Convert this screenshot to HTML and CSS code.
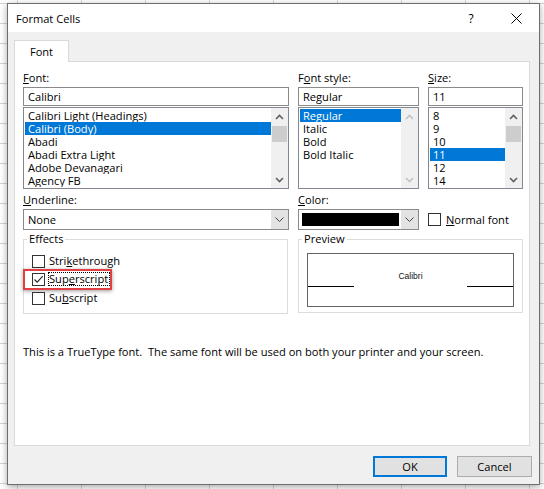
FILE: index.html
```html
<!DOCTYPE html>
<html>
<head>
<meta charset="utf-8">
<title>Format Cells</title>
<link rel="stylesheet" href="styles.css">
</head>
<body>
<div class="dialog">
  <div class="titlebar">
    <span class="title">Format Cells</span>
    <span class="help">?</span>
    <span class="close"><svg width="11" height="11" viewBox="0 0 11 11"><path d="M0.5 0.5 L10.5 10.5 M10.5 0.5 L0.5 10.5" stroke="#000" stroke-width="1" fill="none"/></svg></span>
  </div>
  <div class="client">
    <div class="tab">Font</div>
    <div class="panel">
      <div class="grid">
        <div class="field">
          <div class="label"><u>F</u>ont:</div>
          <div class="edit">Calibri</div>
          <div class="list">
            <div class="items">
              <div class="item">Calibri Light (Headings)</div>
              <div class="item sel">Calibri (Body)</div>
              <div class="item">Abadi</div>
              <div class="item">Abadi Extra Light</div>
              <div class="item">Adobe Devanagari</div>
              <div class="item">Agency FB</div>
            </div>
            <div class="vscroll">
              <div class="arrow"><svg width="9" height="6" viewBox="0 0 9 6"><path d="M1 5 L4.5 1.5 L8 5" fill="none" stroke="#606060" stroke-width="1.6"/></svg></div>
              <div class="thumb"></div>
              <div class="track"></div>
              <div class="arrow"><svg width="9" height="6" viewBox="0 0 9 6"><path d="M1 1 L4.5 4.5 L8 1" fill="none" stroke="#606060" stroke-width="1.6"/></svg></div>
            </div>
          </div>
        </div>
        <div class="field">
          <div class="label">F<u>o</u>nt style:</div>
          <div class="edit">Regular</div>
          <div class="list">
            <div class="items">
              <div class="item sel">Regular</div>
              <div class="item">Italic</div>
              <div class="item">Bold</div>
              <div class="item">Bold Italic</div>
            </div>
            <div class="vscroll">
              <div class="arrow"><svg width="9" height="6" viewBox="0 0 9 6"><path d="M1 5 L4.5 1.5 L8 5" fill="none" stroke="#c2c2c2" stroke-width="1.6"/></svg></div>
              <div class="track"></div>
              <div class="arrow"><svg width="9" height="6" viewBox="0 0 9 6"><path d="M1 1 L4.5 4.5 L8 1" fill="none" stroke="#c2c2c2" stroke-width="1.6"/></svg></div>
            </div>
          </div>
        </div>
        <div class="field">
          <div class="label"><u>S</u>ize:</div>
          <div class="edit">11</div>
          <div class="list">
            <div class="items">
              <div class="item">8</div>
              <div class="item">9</div>
              <div class="item">10</div>
              <div class="item sel">11</div>
              <div class="item">12</div>
              <div class="item">14</div>
            </div>
            <div class="vscroll">
              <div class="arrow"><svg width="9" height="6" viewBox="0 0 9 6"><path d="M1 5 L4.5 1.5 L8 5" fill="none" stroke="#606060" stroke-width="1.6"/></svg></div>
              <div class="thumb"></div>
              <div class="track"></div>
              <div class="arrow"><svg width="9" height="6" viewBox="0 0 9 6"><path d="M1 1 L4.5 4.5 L8 1" fill="none" stroke="#606060" stroke-width="1.6"/></svg></div>
            </div>
          </div>
        </div>

        <div class="field row2">
          <div class="label"><u>U</u>nderline:</div>
          <div class="combo">
            <div class="combo-text">None</div>
            <div class="combo-btn"><svg width="9" height="5" viewBox="0 0 9 5"><path d="M0.5 0.5 L4.5 4.5 L8.5 0.5" fill="none" stroke="#444" stroke-width="1"/></svg></div>
          </div>
        </div>
        <div class="field row2">
          <div class="label"><u>C</u>olor:</div>
          <div class="combo">
            <div class="swatch"></div>
            <div class="combo-btn"><svg width="9" height="5" viewBox="0 0 9 5"><path d="M0.5 0.5 L4.5 4.5 L8.5 0.5" fill="none" stroke="#444" stroke-width="1"/></svg></div>
          </div>
        </div>
        <div class="normal row2">
          <span class="box"></span><span class="cb-text"><u>N</u>ormal font</span>
        </div>

        <fieldset class="group effects">
          <legend>Effects</legend>
          <div class="cb-row first">
            <span class="box"></span><span class="cb-text">Stri<u>k</u>ethrough</span>
          </div>
          <div class="cb-row">
            <span class="box"><svg width="11" height="11" viewBox="0 0 11 11"><path d="M1.5 5.5 L4.2 8.2 L9.7 2.2" fill="none" stroke="#222" stroke-width="1.1"/></svg></span><span class="cb-text focus">Sup<u>e</u>rscript</span>
            <span class="redbox"></span>
          </div>
          <div class="cb-row last">
            <span class="box"></span><span class="cb-text">Su<u>b</u>script</span>
          </div>
        </fieldset>
        <fieldset class="group preview">
          <legend>Preview</legend>
          <div class="pv">
            <div class="baseline"></div>
            <div class="pv-text">Calibri</div>
            <div class="baseline"></div>
          </div>
        </fieldset>
      </div>
      <div class="note">This is a TrueType font.  The same font will be used on both your printer and your screen.</div>
    </div>
    <div class="buttons">
      <div class="btn default">OK</div>
      <div class="btn">Cancel</div>
    </div>
  </div>
</div>
</body>
</html>
```

FILE: styles.css
```css
* { box-sizing: border-box; }
html, body { margin: 0; padding: 0; }
body {
  width: 544px;
  height: 489px;
  overflow: hidden;
  padding: 3px 0 0 7px;
  background-color: #fff;
  background-image:
    linear-gradient(to right, #d4d4d4 1px, transparent 1px),
    linear-gradient(to bottom, #d4d4d4 1px, transparent 1px);
  background-size: 64px 20px, 64px 20px;
  background-position: 17px 0, 0 3px;
  font-family: "Open Sans", "Noto Sans", sans-serif;
  font-size: 11.1px;
  color: #000;
}
.dialog {
  width: 533px;
  height: 482px;
  border: 1px solid #6e6e6e;
  background: #f0f0f0;
  box-shadow: 0 2px 7px rgba(0, 0, 0, 0.35);
  display: flex;
  flex-direction: column;
}
.titlebar {
  height: 28px;
  flex: none;
  background: #fff;
  display: flex;
  align-items: center;
  padding-left: 8px;
}
.title { flex: 1; }
.help {
  width: 14px;
  text-align: center;
  margin-right: 15px;
  font-size: 12px;
}
.close {
  width: 46px;
  height: 28px;
  display: flex;
  align-items: center;
  justify-content: center;
}
.close svg { display: block; }
.client { padding: 8px 0 0 6px; }
.tab {
  width: 55px;
  height: 22px;
  background: #fff;
  border: 1px solid #d9d9d9;
  border-bottom: none;
  margin-bottom: -1px;
  position: relative;
  z-index: 1;
  display: flex;
  align-items: center;
  justify-content: center;
}
.panel {
  width: 516px;
  height: 385px;
  background: #fff;
  border: 1px solid #d9d9d9;
  padding: 8px 0 0 8px;
}
.grid {
  display: grid;
  grid-template-columns: 266px 121px 95px;
  column-gap: 9px;
}
.field { display: flex; flex-direction: column; }
.label { height: 16px; line-height: 16px; white-space: nowrap; }
.edit {
  height: 19px;
  margin-top: 1px;
  border: 1px solid #8a8a8a;
  padding-left: 4px;
  line-height: 17px;
  background: #fff;
}
.list {
  height: 82px;
  margin-top: 1px;
  border: 1px solid #828790;
  display: flex;
  background: #fff;
}
.items { flex: 1; padding: 1px 0 0 1px; min-width: 0; }
.item {
  height: 13px;
  line-height: 13px;
  padding-left: 3px;
  white-space: nowrap;
  overflow: hidden;
}
.item.sel { background: #0078d7; color: #fff; }
.vscroll {
  width: 17px;
  flex: none;
  background: #f0f0f0;
  display: flex;
  flex-direction: column;
}
.arrow {
  height: 17px;
  flex: none;
  display: flex;
  align-items: center;
  justify-content: center;
}
.arrow svg { display: block; }
.thumb {
  height: 16px;
  flex: none;
  margin: 1px 1px 0;
  background: #cdcdcd;
}
.track { flex: 1; }
.row2 { margin-top: 3px; }
.combo {
  height: 21px;
  margin-top: 1px;
  border: 1px solid #8a8a8a;
  background: #fff;
  display: flex;
}
.combo-text { flex: 1; padding-left: 4px; line-height: 19px; }
.combo-btn {
  width: 17px;
  flex: none;
  margin-left: auto;
  background: #e3e3e3;
  display: flex;
  align-items: center;
  justify-content: center;
}
.combo-btn svg { display: block; }
.swatch {
  width: 97px;
  height: 13px;
  margin: 3px 0 0 3px;
  background: #000;
}
.normal {
  align-self: end;
  height: 21px;
  display: flex;
  align-items: center;
}
.box {
  width: 13px;
  height: 13px;
  flex: none;
  border: 1px solid #333;
  background: #fff;
  display: flex;
}
.box svg { display: block; }
.normal .cb-text { margin-left: 5px; }
.group {
  margin: 1px 0 0;
  padding: 0;
  border: 1px solid #dcdcdc;
  min-width: 0;
}
.group legend {
  padding: 0 2px;
  margin-left: 3px;
  height: 16px;
  line-height: 16px;
}
.effects { width: 265px; height: 83px; }
.preview { grid-column: 2 / span 2; height: 82px; }
.cb-row {
  position: relative;
  display: flex;
  align-items: center;
  height: 18px;
  margin-left: 8px;
}
.cb-row.first { margin-top: 5px; }
.cb-row.last { margin-top: 1px; }
.cb-text { margin-left: 4px; line-height: 14px; white-space: nowrap; }
.cb-text.focus {
  margin-left: 3px;
  border: 1px dotted #000;
  line-height: 12px;
  padding-right: 1px;
}
.redbox {
  position: absolute;
  left: -9px;
  top: -1px;
  width: 89px;
  height: 21px;
  border: 2px solid #e23f44;
  box-shadow: 0 1px 4px rgba(0, 0, 0, 0.4);
}
.pv {
  margin: 6px 0 0 8px;
  width: 207px;
  height: 54px;
  border: 1px solid #646464;
  background: #fff;
  display: flex;
  align-items: flex-start;
}
.baseline {
  width: 46px;
  height: 1px;
  flex: none;
  margin-top: 32px;
  background: #000;
}
.pv-text {
  flex: 1;
  text-align: center;
  margin-top: 17px;
  font-family: "Liberation Sans", Arial, sans-serif;
  font-size: 8.5px;
  line-height: 10px;
  color: #111;
}
.note {
  margin-top: 30px;
  line-height: 16px;
  white-space: pre;
}
.buttons {
  display: flex;
  justify-content: flex-end;
  gap: 10px;
  margin-top: 10px;
  padding-right: 7px;
}
.btn {
  width: 75px;
  height: 21px;
  background: #e1e1e1;
  border: 1px solid #adadad;
  display: flex;
  align-items: center;
  justify-content: center;
}
.btn.default { width: 74px; border: 2px solid #0078d7; }
```
